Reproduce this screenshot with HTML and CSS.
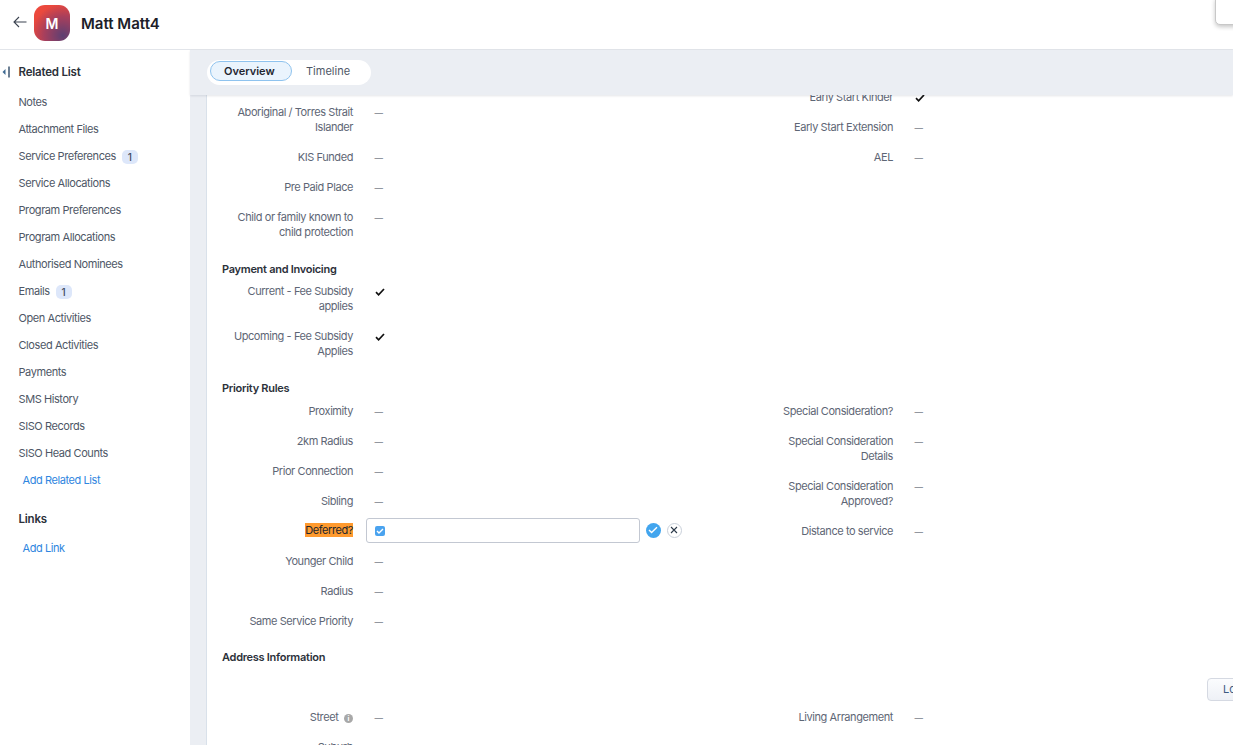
FILE: index.html
```html
<!DOCTYPE html>
<html lang="en">
<head>
<meta charset="utf-8">
<title>Matt Matt4</title>
<link rel="stylesheet" href="styles.css">
</head>
<body>
<div class="app">
  <header class="header">
    <svg class="back" width="14" height="12" viewBox="0 0 14 12"><path d="M13.5 6H1M6 1L1 6l5 5" fill="none" stroke="#3b4350" stroke-width="1.1"/></svg>
    <div class="avatar">M</div>
    <h1 class="title">Matt Matt4</h1>
    <div class="corner-box"></div>
  </header>
  <div class="body">
    <aside class="sidebar">
      <div class="side-head">
        <svg class="collapse" width="8" height="12" viewBox="0 0 8 12"><path d="M3.5 3v6L0.5 6z" fill="#3f6a92"/><path d="M7 .5v11" stroke="#2f4a66" stroke-width="1.4"/></svg>
        <span>Related List</span>
      </div>
      <ul class="side-list">
        <li class="side-item">Notes</li>
        <li class="side-item">Attachment Files</li>
        <li class="side-item">Service Preferences <span class="badge">1</span></li>
        <li class="side-item">Service Allocations</li>
        <li class="side-item">Program Preferences</li>
        <li class="side-item">Program Allocations</li>
        <li class="side-item">Authorised Nominees</li>
        <li class="side-item">Emails <span class="badge">1</span></li>
        <li class="side-item">Open Activities</li>
        <li class="side-item">Closed Activities</li>
        <li class="side-item">Payments</li>
        <li class="side-item">SMS History</li>
        <li class="side-item">SISO Records</li>
        <li class="side-item">SISO Head Counts</li>
        <li class="side-item side-link">Add Related List</li>
      </ul>
      <div class="side-head side-head-links"><span>Links</span></div>
      <div class="side-item side-link">Add Link</div>
    </aside>
    <main class="main">
      <div class="tabbar">
        <div class="tabs">
          <span class="tab tab-active">Overview</span>
          <span class="tab">Timeline</span>
        </div>
      </div>
      <div class="panel">
        <div class="panel-inner">
          <section class="grid">
            <div class="col col-offset">
              <div class="row"><div class="label">Aboriginal / Torres Strait Islander</div><div class="value">—</div></div>
              <div class="row"><div class="label">KIS Funded</div><div class="value">—</div></div>
              <div class="row"><div class="label">Pre Paid Place</div><div class="value">—</div></div>
              <div class="row"><div class="label">Child or family known to child protection</div><div class="value">—</div></div>
            </div>
            <div class="col">
              <div class="row"><div class="label">Early Start Kinder</div><div class="value"><svg class="tick" width="10" height="8" viewBox="0 0 10 8"><path d="M1 4.2l2.6 2.6L9 1" fill="none" stroke="#111" stroke-width="1.7"/></svg></div></div>
              <div class="row"><div class="label">Early Start Extension</div><div class="value">—</div></div>
              <div class="row"><div class="label">AEL</div><div class="value">—</div></div>
            </div>
          </section>
          <h2 class="heading">Payment and Invoicing</h2>
          <section class="grid">
            <div class="col">
              <div class="row"><div class="label">Current - Fee Subsidy applies</div><div class="value"><svg class="tick" width="10" height="8" viewBox="0 0 10 8"><path d="M1 4.2l2.6 2.6L9 1" fill="none" stroke="#111" stroke-width="1.7"/></svg></div></div>
              <div class="row"><div class="label">Upcoming - Fee Subsidy Applies</div><div class="value"><svg class="tick" width="10" height="8" viewBox="0 0 10 8"><path d="M1 4.2l2.6 2.6L9 1" fill="none" stroke="#111" stroke-width="1.7"/></svg></div></div>
            </div>
          </section>
          <h2 class="heading heading-priority">Priority Rules</h2>
          <section class="grid">
            <div class="col">
              <div class="row"><div class="label">Proximity</div><div class="value">—</div></div>
              <div class="row"><div class="label">2km Radius</div><div class="value">—</div></div>
              <div class="row"><div class="label">Prior Connection</div><div class="value">—</div></div>
              <div class="row"><div class="label">Sibling</div><div class="value">—</div></div>
              <div class="row row-edit">
                <div class="label"><mark class="hl">Deferred?</mark></div>
                <div class="input"><span class="checkbox"><svg width="8" height="6" viewBox="0 0 8 6"><path d="M1 3l2 2 4-4" fill="none" stroke="#fff" stroke-width="1.4"/></svg></span></div>
                <span class="ok"><svg width="10" height="8" viewBox="0 0 10 8"><path d="M1 4l2.6 2.6L9 1.2" fill="none" stroke="#fff" stroke-width="1.4"/></svg></span>
                <span class="cancel"><svg width="8" height="8" viewBox="0 0 8 8"><path d="M1 1l6 6M7 1L1 7" fill="none" stroke="#2c3a4a" stroke-width="1.1"/></svg></span>
              </div>
              <div class="row"><div class="label">Younger Child</div><div class="value">—</div></div>
              <div class="row"><div class="label">Radius</div><div class="value">—</div></div>
              <div class="row"><div class="label">Same Service Priority</div><div class="value">—</div></div>
            </div>
            <div class="col">
              <div class="row"><div class="label">Special Consideration?</div><div class="value">—</div></div>
              <div class="row"><div class="label">Special Consideration Details</div><div class="value">—</div></div>
              <div class="row"><div class="label">Special Consideration Approved?</div><div class="value">—</div></div>
              <div class="row"><div class="label">Distance to service</div><div class="value">—</div></div>
            </div>
          </section>
          <h2 class="heading heading-address">Address Information</h2>
          <div class="toolbar"><button class="btn" type="button">Locate Map</button></div>
          <section class="grid">
            <div class="col">
              <div class="row"><div class="label">Street <span class="info">i</span></div><div class="value">—</div></div>
              <div class="row"><div class="label">Suburb</div><div class="value">—</div></div>
            </div>
            <div class="col">
              <div class="row"><div class="label">Living Arrangement</div><div class="value">—</div></div>
            </div>
          </section>
        </div>
      </div>
    </main>
  </div>
</div>
</body>
</html>
```
FILE: styles.css
```css
* { box-sizing: border-box; }
html, body { margin: 0; height: 100%; overflow: hidden; }
body { font-family: Inter, "Noto Sans", sans-serif; font-size: 11px; line-height: 15px; letter-spacing: -0.42px; color: #4e5766; background: #fff; }
.app { display: flex; flex-direction: column; height: 745px; width: 1233px; overflow: hidden; }
.header { position: relative; flex: none; height: 50px; display: flex; align-items: center; padding: 0 0 3px 12px; border-bottom: 1px solid #e2e5ea; background: #fff; }
.back { flex: none; margin: 0 0 2px 1px; }
.avatar { flex: none; width: 36px; height: 36px; margin-left: 7px; border-radius: 11px; display: flex; align-items: center; justify-content: center; color: #fff; font-size: 14px; font-weight: 600; letter-spacing: 0; background: radial-gradient(circle at 80% 85%, #5d3f72 0, #a83f5c 45%, transparent 75%), linear-gradient(135deg, #ef4a3c, #e2463f 60%, #b8405a); }
.title { margin: 1px 0 0 11px; font-size: 15px; line-height: 20px; font-weight: 600; letter-spacing: 0; color: #1c2028; }
.corner-box { position: absolute; top: -2px; right: -10px; width: 28px; height: 27px; background: #fff; border: 1px solid #c8c8c8; border-radius: 0 0 0 5px; box-shadow: 0 2px 4px rgba(0,0,0,.22); }
.body { flex: 1; display: flex; min-height: 0; }
.sidebar { flex: none; width: 190px; background: #fff; padding-top: 14px; }
.side-head { display: flex; align-items: center; height: 16px; padding-left: 18.5px; position: relative; font-size: 11.5px; font-weight: 600; letter-spacing: -0.2px; color: #2c313a; }
.collapse { position: absolute; left: 2px; top: 2px; }
.side-list { list-style: none; margin: 9px 0 0; padding: 0; }
.side-item { height: 27px; padding-left: 18.5px; display: flex; align-items: center; gap: 6px; color: #4e5766; }
.side-link { padding-left: 22.5px; color: #2f86e0; }
.side-head-links { margin-top: 17px; margin-bottom: 7.5px; }
.badge { min-width: 16px; height: 14px; padding: 0 5px; border-radius: 5px; background: #dde7fa; color: #3d4a5f; font-size: 10px; line-height: 14px; letter-spacing: 0; text-align: center; font-weight: 500; }
.main { flex: 1; min-width: 0; display: flex; flex-direction: column; background: #ebeef3; }
.tabbar { position: relative; z-index: 1; flex: none; height: 45px; display: flex; align-items: flex-start; padding: 10px 0 0 17px; background: #ebeef3; box-shadow: 0 1px 2px rgba(40,50,70,.12); }
.tabs { display: flex; align-items: flex-start; height: 25px; padding: 0 21px 0 3px; background: #fff; border-radius: 13px; letter-spacing: 0; }
.tab { margin-top: 2px; padding: 0 0 0 14px; color: #4e5766; line-height: 18px; }
.tab-active { flex: none; width: 82px; height: 20px; margin-top: 1px; line-height: 18px; padding: 0 0 0 13px; border: 1px solid #8fc3ee; border-radius: 10px; background: #eaf4fd; color: #1f2630; font-weight: 600; }
.panel { flex: 1; min-height: 0; margin-left: 16px; background: #fff; border-left: 1px solid #d9e1ea; overflow: hidden; }
.panel-inner { width: 1080px; margin-top: -5.5px; }
.grid { display: grid; grid-template-columns: 540px 540px; }
.col-offset { padding-top: 15px; }
.row { display: flex; padding-bottom: 15px; }
.label { flex: none; width: 130px; margin-left: 16px; text-align: right; color: #5e6675; }
.value { height: 15px; margin-left: 21.5px; font-size: 8.5px; line-height: 16px; letter-spacing: 0; color: #7a808a; }
.tick { display: block; margin-top: 4px; }
.heading { margin: 7px 0 7px 15px; font-size: 11px; line-height: 15px; font-weight: 600; letter-spacing: -0.28px; color: #2c313a; }
.heading-priority { margin-bottom: 8px; }
.heading-address { margin-top: 6px; }
.row-edit { height: 30px; padding-bottom: 0; margin-top: -1px; margin-bottom: 1px; align-items: flex-start; }
.hl { background: #ff9a2e; color: #22262d; }
.input { flex: none; width: 274px; height: 25px; margin: -5px 0 0 12.5px; border: 1px solid #c3c8d2; border-radius: 3px; background: #fff; padding: 7px 0 0 8px; }
.checkbox { display: flex; align-items: center; justify-content: center; width: 10px; height: 10px; border-radius: 2px; background: #4aa3ef; }
.ok { flex: none; width: 15px; height: 15px; margin: 0 0 0 6px; border-radius: 50%; background: #42a5ee; display: flex; align-items: center; justify-content: center; }
.cancel { flex: none; width: 15px; height: 15px; margin-left: 6px; border-radius: 50%; border: 1px solid #c9d0da; display: flex; align-items: center; justify-content: center; }
.toolbar { height: 38px; padding: 6px 0 0 1000px; }
.btn { width: 80px; height: 23px; padding: 0 0 0 15px; text-align: left; font: inherit; letter-spacing: 0; color: #3d5a80; border: 1px solid #d5d9e2; border-radius: 4px; background: linear-gradient(#fbfcfe, #eef1f6); white-space: nowrap; }
.info { display: inline-block; width: 9px; height: 9px; margin-left: 3px; border-radius: 50%; background: #a8a8a8; color: #fff; font-size: 7px; line-height: 9px; letter-spacing: 0; text-align: center; font-weight: 700; vertical-align: 0; }
```
